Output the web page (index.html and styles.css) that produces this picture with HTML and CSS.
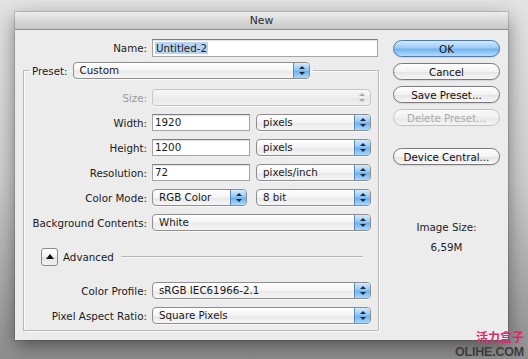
FILE: index.html
```html
<!DOCTYPE html>
<html lang="en">
  <head>
    <meta charset="UTF-8" />
    <meta name="viewport" content="width=device-width, initial-scale=1.0" />
    <title>New</title>
    <link rel="stylesheet" href="styles.css">
  </head>
  <body>
    <div class="dialog">
      <div class="titlebar">New</div>
      <div class="content">
        <div class="main">
          <div class="name-row">
            <label>Name:</label>
            <div class="input"><span class="selected">Untitled-2</span></div>
          </div>

          <fieldset class="preset">
            <legend>
              <div class="legend-inner">
                <label>Preset:</label>
                <div class="select preset-select"><span class="value">Custom</span><span class="arrows"></span></div>
              </div>
            </legend>

            <div class="row">
              <label class="muted">Size:</label>
              <div class="select disabled"><span class="value"></span><span class="arrows"></span></div>
            </div>
            <div class="row">
              <label>Width:</label>
              <div class="pair">
                <div class="input">1920</div>
                <div class="select"><span class="value">pixels</span><span class="arrows"></span></div>
              </div>
            </div>
            <div class="row">
              <label>Height:</label>
              <div class="pair">
                <div class="input">1200</div>
                <div class="select"><span class="value">pixels</span><span class="arrows"></span></div>
              </div>
            </div>
            <div class="row">
              <label>Resolution:</label>
              <div class="pair">
                <div class="input">72</div>
                <div class="select"><span class="value">pixels/inch</span><span class="arrows"></span></div>
              </div>
            </div>
            <div class="row">
              <label>Color Mode:</label>
              <div class="pair mode">
                <div class="select"><span class="value">RGB Color</span><span class="arrows"></span></div>
                <div class="select"><span class="value">8 bit</span><span class="arrows"></span></div>
              </div>
            </div>
            <div class="row">
              <label>Background Contents:</label>
              <div class="select"><span class="value">White</span><span class="arrows"></span></div>
            </div>

            <div class="advanced">
              <span class="toggle"></span>
              <span>Advanced</span>
              <span class="rule"></span>
            </div>

            <div class="row">
              <label>Color Profile:</label>
              <div class="select"><span class="value">sRGB IEC61966-2.1</span><span class="arrows"></span></div>
            </div>
            <div class="row">
              <label>Pixel Aspect Ratio:</label>
              <div class="select"><span class="value">Square Pixels</span><span class="arrows"></span></div>
            </div>
          </fieldset>
        </div>

        <div class="side">
          <div class="buttons">
            <button class="btn default">OK</button>
            <button class="btn">Cancel</button>
            <button class="btn">Save Preset...</button>
            <button class="btn" disabled>Delete Preset...</button>
          </div>
          <button class="btn central">Device Central...</button>
          <div class="image-size">
            <p>Image Size:</p>
            <p>6,59M</p>
          </div>
        </div>
      </div>
    </div>

    <div class="watermark">
      <p class="cn">活力盒子</p>
      <p class="en">OLIHE.COM</p>
    </div>
  </body>
</html>
```

FILE: styles.css
```css
* {
  box-sizing: border-box;
  margin: 0;
  padding: 0;
}

body {
  width: 528px;
  height: 359px;
  overflow: hidden;
  padding: 12px 0 0 15px;
  background: linear-gradient(180deg, #e3e3e3 0%, #cdcdcd 50%, #8e8e8e 100%);
  font-family: "DejaVu Sans", Verdana, sans-serif;
  font-size: 10.3px;
  color: #1a1a1a;
  position: relative;
}

.dialog {
  width: 493px;
  height: 328px;
  background: #ececec;
  box-shadow: 0 6px 18px rgba(0, 0, 0, 0.45), 0 0 0 1px rgba(0, 0, 0, 0.12);
}

.titlebar {
  height: 18px;
  line-height: 17px;
  text-align: center;
  font-size: 10.8px;
  color: #2c2c2c;
  background: linear-gradient(180deg, #ececec, #d6d6d6 60%, #c6c6c6);
  border-bottom: 1px solid #8f8f8f;
}

.content {
  display: flex;
  padding: 9px 8px 0 8px;
}

.main {
  width: 356px;
}

label {
  text-align: right;
  white-space: nowrap;
}

.muted {
  color: #9a9a9a;
}

.name-row {
  display: grid;
  grid-template-columns: 124px 226px;
  column-gap: 5px;
  align-items: center;
}

.input {
  height: 17px;
  line-height: 15px;
  padding-left: 2px;
  background: #fff;
  border: 1px solid #a4a4a4;
  border-top-color: #7e7e7e;
  box-shadow: inset 0 1px 1px rgba(0, 0, 0, 0.12);
}

.name-row .input {
  height: 18px;
  line-height: 16px;
}

.selected {
  background: #b7d4f3;
  padding: 0 1px;
}

.select {
  display: flex;
  height: 17px;
  border: 1px solid #8e8e8e;
  border-radius: 4px;
  background: linear-gradient(180deg, #ffffff, #f4f4f4 50%, #e8e8e8 52%, #f6f6f6);
  box-shadow: 0 1px 0 rgba(255, 255, 255, 0.7);
  overflow: hidden;
}

.select .value {
  flex: 1;
  padding-left: 6px;
  line-height: 15px;
  white-space: nowrap;
  overflow: hidden;
}

.select .arrows {
  position: relative;
  width: 16px;
  border-left: 1px solid #5c86b4;
  background: linear-gradient(180deg, #d5ebfd, #93c7f5 45%, #6cb1ef 55%, #a9d8fc);
}

.select .arrows::before,
.select .arrows::after {
  content: "";
  position: absolute;
  left: 5px;
  border-left: 3px solid transparent;
  border-right: 3px solid transparent;
}

.select .arrows::before {
  top: 3px;
  border-bottom: 3px solid #1c2a3a;
}

.select .arrows::after {
  top: 9px;
  border-top: 3px solid #1c2a3a;
}

.select.disabled {
  border-color: #c6c6c6;
  background: linear-gradient(180deg, #f6f6f6, #eeeeee 50%, #e8e8e8 52%, #f0f0f0);
}

.select.disabled .arrows {
  border-left: none;
  background: none;
}

.select.disabled .arrows::before {
  border-bottom-color: #a8a8a8;
}

.select.disabled .arrows::after {
  border-top-color: #a8a8a8;
}

.preset {
  margin-top: 5px;
  width: 356px;
  min-width: 0;
  border: 1px solid #b9b9b9;
  box-shadow: 1px 1px 0 #fafafa, inset 1px 1px 0 #fafafa;
  padding: 10px 6px 6px 0;
  display: flex;
  flex-direction: column;
  gap: 8px;
}

.preset legend {
  margin-left: 5px;
  padding: 0 3px;
}

.legend-inner {
  display: flex;
  align-items: center;
  gap: 5px;
}

.preset-select {
  width: 237px;
}

.row {
  display: grid;
  grid-template-columns: 123px 219px;
  column-gap: 5px;
  align-items: center;
}

.pair {
  display: grid;
  grid-template-columns: 98px 115px;
  column-gap: 6px;
}

.pair.mode {
  grid-template-columns: 95px 115px;
  column-gap: 9px;
}

.advanced {
  display: flex;
  align-items: center;
  height: 17px;
  margin: 9px 0;
  padding-left: 17px;
}

.toggle {
  position: relative;
  width: 17px;
  height: 18px;
  margin-right: 5px;
  border: 1px solid #8a8a8a;
  border-radius: 3px;
  background: linear-gradient(180deg, #ffffff, #f0f0f0 50%, #e3e3e3 52%, #f3f3f3);
}

.toggle::after {
  content: "";
  position: absolute;
  left: 4px;
  top: 5px;
  border-left: 4px solid transparent;
  border-right: 4px solid transparent;
  border-bottom: 5px solid #111;
}

.rule {
  flex: 1;
  margin: 0 9px 0 7px;
  border-top: 1px solid #b4b4b4;
  border-bottom: 1px solid #fafafa;
}

.side {
  width: 107px;
  margin-left: 14px;
  padding-top: 1px;
  display: flex;
  flex-direction: column;
}

.buttons {
  display: flex;
  flex-direction: column;
  gap: 6px;
}

.btn {
  height: 17px;
  font-family: inherit;
  font-size: 10.3px;
  color: #111;
  border: 1px solid #7a7a7a;
  border-radius: 9px;
  background: linear-gradient(180deg, #ffffff, #f3f3f3 50%, #e4e4e4 52%, #f7f7f7);
  box-shadow: 0 1px 1px rgba(0, 0, 0, 0.1);
}

.btn.default {
  border-color: #4f79a6;
  background: linear-gradient(180deg, #d4e9fd, #9dcbf5 45%, #74b4f0 55%, #b4dcfd);
}

.btn:disabled {
  color: #a9a9a9;
  border-color: #c2c2c2;
  background: linear-gradient(180deg, #fafafa, #f0f0f0 50%, #e9e9e9 52%, #f3f3f3);
  box-shadow: none;
}

.btn.central {
  margin-top: 22px;
}

.image-size {
  margin-top: 56px;
  text-align: center;
  line-height: 13px;
  color: #222;
}

.image-size p + p {
  margin-top: 7px;
}

.watermark {
  position: absolute;
  right: 4px;
  bottom: 0;
  text-align: right;
  font-weight: bold;
  line-height: normal;
}

.watermark .cn {
  font-family: "Noto Sans CJK SC", sans-serif;
  font-size: 12px;
  color: #d92a70;
}

.watermark .en {
  font-family: "Liberation Sans", Arial, sans-serif;
  font-size: 12.5px;
  letter-spacing: -0.2px;
  color: #3d3d3d;
}
```
